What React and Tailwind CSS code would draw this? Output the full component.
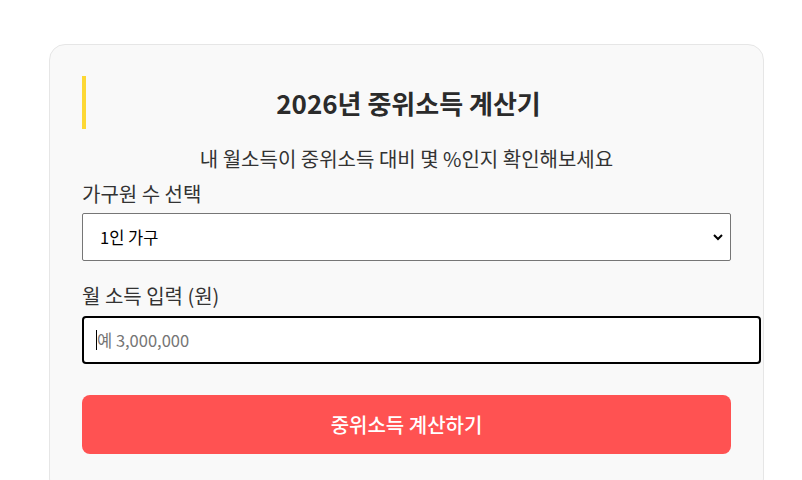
export default function App() {
  return (
    <div className="min-h-screen bg-white pt-[44px] pl-[49px] font-['Noto_Sans_CJK_KR','Noto_Sans',sans-serif] text-[#333]">
      <div className="w-[715px] rounded-2xl border border-[#e6e6e6] bg-[#f9f9f9] px-8 pt-[31px] pb-10">
        <h2 className="border-l-4 border-[#fdd835] py-3 text-center text-[26px] leading-[29px] font-bold text-[#2b2b2b]">
          2026년 중위소득 계산기
        </h2>
        <p className="mt-4 text-center text-[20px] leading-[27px] text-[#333]">
          내 월소득이 중위소득 대비 몇 %인지 확인해보세요
        </p>

        <label className="mt-2 block text-[20px] leading-[27px] text-[#333]">가구원 수 선택</label>
        <div className="relative mt-[6px]">
          <select className="h-12 w-full appearance-none rounded-[2px] border border-[#767676] bg-white px-[17px] text-[16.5px] text-black outline-none">
            <option>1인 가구</option>
            <option>2인 가구</option>
            <option>3인 가구</option>
            <option>4인 가구</option>
          </select>
          <svg
            className="pointer-events-none absolute right-[7px] top-1/2 h-3 w-3 -translate-y-1/2"
            viewBox="0 0 12 12"
            fill="none"
            stroke="#000"
            strokeWidth="2"
          >
            <path d="M2 4l4 4 4-4" />
          </svg>
        </div>

        <label className="mt-[21px] block text-[20px] leading-[27px] text-[#333]">월 소득 입력 (원)</label>
        <div className="relative mt-[7px] w-[679px]">
          <input
            type="text"
            placeholder="예 3,000,000"
            className="h-12 w-full rounded-[4px] border-2 border-black bg-white px-[13px] text-[16.5px] text-black outline-none placeholder:text-[#757575]"
          />
          <span className="pointer-events-none absolute left-[14px] top-[14px] h-[20px] w-px bg-black" />
        </div>

        <button
          type="button"
          className="mt-[31px] h-[59px] w-full rounded-lg bg-[#ff5252] text-[20px] font-medium text-white"
        >
          중위소득 계산하기
        </button>
      </div>
    </div>
  );
}
